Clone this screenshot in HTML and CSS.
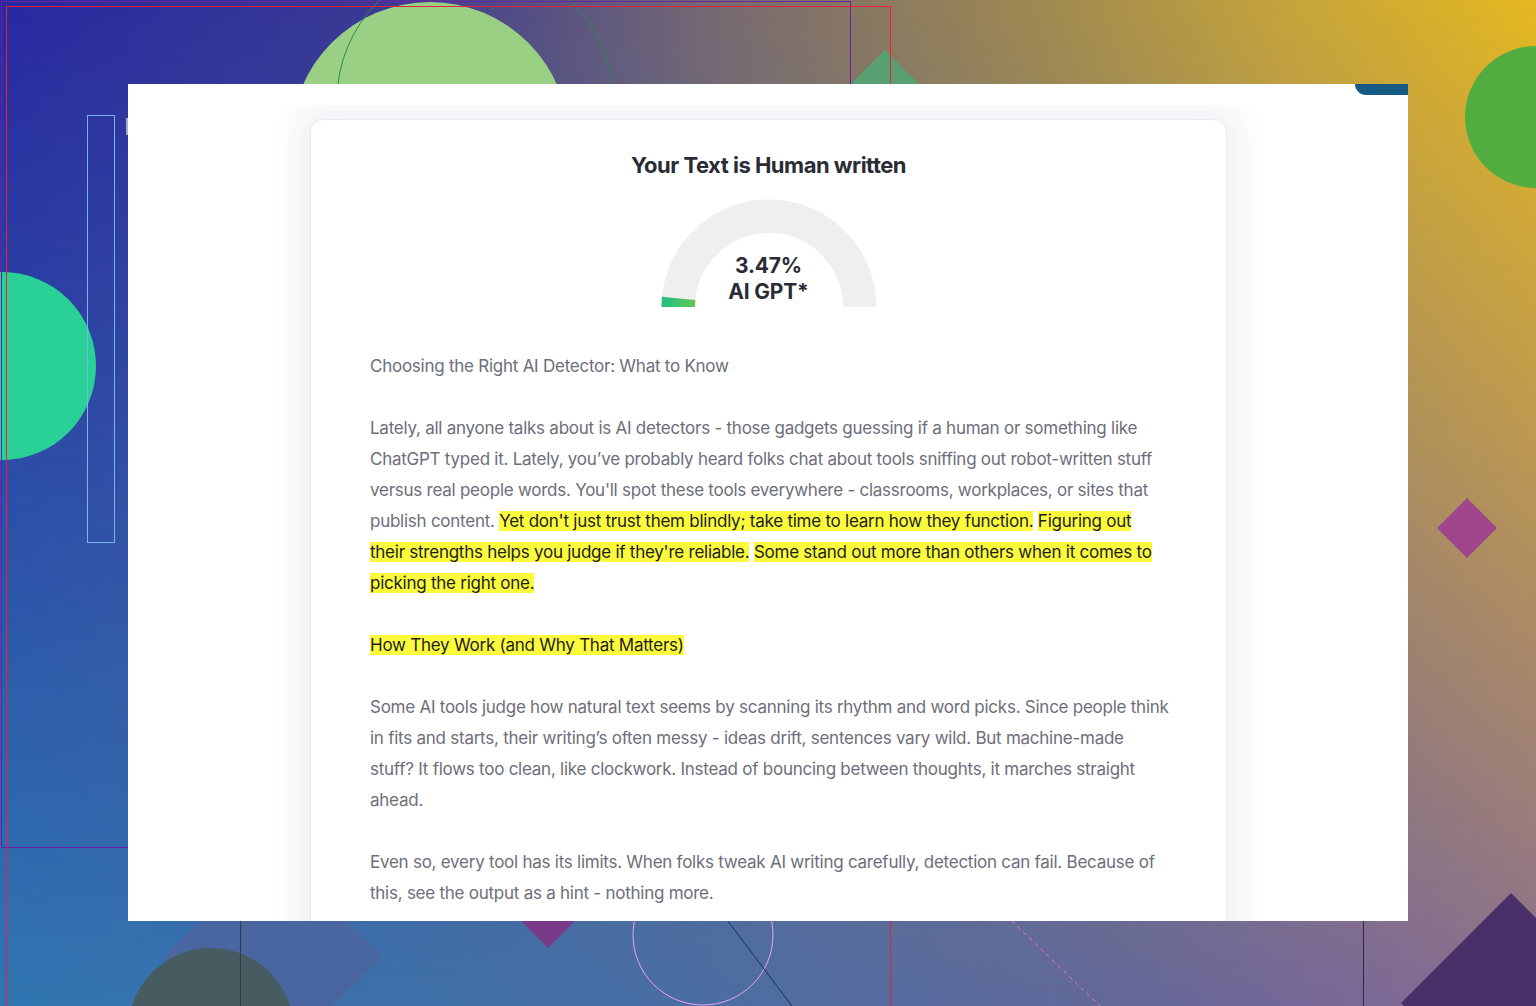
FILE: index.html
```html
<!DOCTYPE html>
<html lang="en">
<head>
<meta charset="utf-8">
<title>AI Detector Result</title>
<link rel="stylesheet" href="styles.css">
</head>
<body>
<div class="desk">
  <svg class="art" width="1536" height="1006" viewBox="0 0 1536 1006" aria-hidden="true">
    <circle cx="430" cy="141" r="139" fill="#9ad084"/>
    <circle cx="475" cy="100" r="138" fill="none" stroke="#2e8a4e" stroke-width="1"/>
    <polygon points="885,50 920,85 885,120 850,85" fill="#58a072"/>
    <circle cx="1536" cy="117" r="71" fill="#52ad40"/>
    <circle cx="2" cy="366" r="94" fill="#2ad197"/>
    <rect x="87.5" y="115.5" width="27" height="427" fill="none" stroke="#7ab4f0" stroke-width="1"/>
    <polygon points="1467,498 1497,528 1467,558 1437,528" fill="#a0468c"/>
    <polygon points="273,848 382,957 273,1066 164,957" fill="#4a66a0"/>
    <circle cx="211" cy="1031" r="83" fill="#465c60"/>
    <line x1="240.5" y1="860" x2="240.5" y2="1006" stroke="#333a40" stroke-width="1"/>
    <polygon points="548,894 575,921 548,948 521,921" fill="#7a3a8a"/>
    <circle cx="703" cy="935" r="70" fill="none" stroke="#f0a0f0" stroke-width="1"/>
    <line x1="660" y1="831" x2="792" y2="1006" stroke="#1a2a70" stroke-width="1"/>
    <line x1="960" y1="871" x2="1100" y2="1006" stroke="#f070e0" stroke-width="1" stroke-dasharray="4 4"/>
    <polygon points="1511,893 1621,1003 1511,1113 1401,1003" fill="#4a3068"/>
    <line x1="1363.5" y1="880" x2="1363.5" y2="1006" stroke="#2e2a40" stroke-width="1"/>
    <rect x="1.5" y="1.5" width="849" height="846" fill="none" stroke="#6a20a0" stroke-width="1"/>
    <rect x="6.5" y="6.5" width="884" height="1100" fill="none" stroke="#e8203a" stroke-width="1"/>
  </svg>
  <span class="edge-mark"></span>

  <main class="screen">
    <div class="topbar"><span class="tab"></span></div>
    <section class="card">
      <h1 class="title">Your Text is Human written</h1>
      <div class="gauge">
        <svg width="216" height="108" viewBox="0 0 216 108" aria-hidden="true">
          <defs>
            <linearGradient id="g" x1="0" y1="0" x2="34" y2="0" gradientUnits="userSpaceOnUse">
              <stop offset="0" stop-color="#1fbf85"/>
              <stop offset="1" stop-color="#62c654"/>
            </linearGradient>
          </defs>
          <path d="M 17.25 108 A 90.75 90.75 0 0 1 198.75 108" fill="none" stroke="#efefef" stroke-width="33.5"/>
          <path d="M 17.25 108 A 90.75 90.75 0 0 1 17.67 99.3" fill="none" stroke="url(#g)" stroke-width="33.5"/>
        </svg>
        <div class="gauge-label">
          <span>3.47%</span>
          <span>AI GPT*</span>
        </div>
      </div>
      <div class="result">
        <p>Choosing the Right AI Detector: What to Know</p>
        <p>Lately, all anyone talks about is AI detectors - those gadgets guessing if a human or something like ChatGPT typed it. Lately, you’ve probably heard folks chat about tools sniffing out robot-written stuff versus real people words. You'll spot these tools everywhere - classrooms, workplaces, or sites that publish content. <mark>Yet don't just trust them blindly; take time to learn how they function.</mark> <mark>Figuring out their strengths helps you judge if they're reliable.</mark> <mark>Some stand out more than others when it comes to picking the right one.</mark></p>
        <p><mark>How They Work (and Why That Matters)</mark></p>
        <p>Some AI tools judge how natural text seems by scanning its rhythm and word picks. Since people think in fits and starts, their writing’s often messy - ideas drift, sentences vary wild. But machine-made stuff? It flows too clean, like clockwork. Instead of bouncing between thoughts, it marches straight ahead.</p>
        <p>Even so, every tool has its limits. When folks tweak AI writing carefully, detection can fail. Because of this, see the output as a hint - nothing more.</p>
      </div>
    </section>
  </main>
</div>
</body>
</html>
```

FILE: styles.css
```css
* { box-sizing: border-box; }

html, body {
  margin: 0;
  padding: 0;
}

body {
  width: 1536px;
  height: 1006px;
  overflow: hidden;
  font-family: Inter, "Noto Sans", "Liberation Sans", sans-serif;
}

.desk {
  position: relative;
  width: 1536px;
  height: 1006px;
  overflow: hidden;
  background: linear-gradient(to right, #3076b2 0%, #4a6ea4 45%, #62689a 72%, #7a6898 88%, #8a7090 100%);
}

.desk::before {
  content: "";
  position: absolute;
  inset: 0;
  background: linear-gradient(to right, #2828a0 0%, #3a3a92 25%, #786a70 47%, #a08a50 68%, #c8a638 85%, #e4b820 100%);
  -webkit-mask-image: linear-gradient(to bottom, #000 0%, rgba(0,0,0,0) 100%);
  mask-image: linear-gradient(to bottom, #000 0%, rgba(0,0,0,0) 100%);
}

.art {
  position: absolute;
  left: 0;
  top: 0;
  display: block;
}

.edge-mark {
  position: absolute;
  left: 126px;
  top: 118px;
  width: 2px;
  height: 17px;
  background: #a8b0c8;
}

.screen {
  position: absolute;
  left: 128px;
  top: 84px;
  width: 1280px;
  height: 837px;
  background: #ffffff;
  overflow: hidden;
  display: flex;
  flex-direction: column;
}

.topbar {
  position: relative;
  z-index: 1;
  height: 21px;
  flex: none;
  background: #ffffff;
}

.tab {
  position: absolute;
  right: 0;
  top: 0;
  width: 53px;
  height: 11px;
  background: #155a85;
  border-bottom-left-radius: 11px;
}

.card {
  position: relative;
  z-index: 0;
  flex: none;
  margin: 14px 0 0 182px;
  width: 917px;
  padding: 31px 59px 0;
  background: #ffffff;
  border: 1px solid #e9e9f0;
  border-radius: 13px;
  box-shadow: 0 0 34px 10px rgba(40, 40, 110, 0.08);
  height: 900px;
}

.title {
  margin: 0;
  text-align: center;
  font-size: 22px;
  line-height: 28px;
  font-weight: 700;
  color: #2a2b35;
  letter-spacing: -0.5px;
}

.gauge {
  position: relative;
  width: 216px;
  height: 108px;
  margin: 20px auto 0;
}

.gauge svg {
  display: block;
}

.gauge-label {
  position: absolute;
  left: 0;
  right: 0;
  top: 54px;
  display: flex;
  flex-direction: column;
  align-items: center;
  font-size: 21px;
  line-height: 26px;
  font-weight: 700;
  color: #2a2b35;
  letter-spacing: -0.2px;
}

.result {
  margin: 44px -3px 0 0;
  font-size: 17px;
  line-height: 31px;
  color: #6d6e7a;
  letter-spacing: -0.25px;
}

.result p {
  margin: 0 0 31px;
}

.result mark {
  background: #fbfb3b;
  color: #1e1e22;
}
```
